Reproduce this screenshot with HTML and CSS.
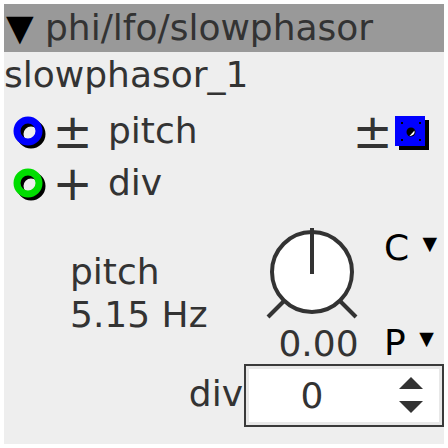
FILE: index.html
```html
<!DOCTYPE html>
<html>
<head>
<meta charset="utf-8">
<link rel="stylesheet" href="styles.css">
</head>
<body>
<div class="panel">
  <div class="header"><span class="tri">▼</span><span class="title">phi/lfo/slowphasor</span></div>
  <div class="name">slowphasor_1</div>
  <div class="ports">
    <div class="port">
      <svg class="ring" width="34" height="34" viewBox="0 0 34 34"><circle cx="18" cy="18" r="11" fill="none" stroke="#000" stroke-width="7"/><circle cx="15" cy="15" r="11" fill="none" stroke="#0000ff" stroke-width="7"/></svg>
      <span class="sym">±</span>
      <span class="plabel">pitch</span>
      <span class="spacer"></span>
      <span class="sym">±</span>
      <svg class="sq" width="36" height="36" viewBox="0 0 36 36">
        <rect x="4" y="4" width="30" height="30" fill="#000"/>
        <rect x="0" y="0" width="30" height="30" fill="#0000ff"/>
        <circle cx="16" cy="16" r="4.5" fill="#000"/>
        <path d="M19.5 14.5 A4.5 4.5 0 0 1 14.5 20 Z" fill="#fff"/>
        <rect x="6" y="6" width="2" height="2" fill="#000"/>
        <rect x="24" y="6" width="2" height="2" fill="#000"/>
        <rect x="6" y="23" width="2" height="2" fill="#000"/>
        <rect x="24" y="23" width="2" height="2" fill="#000"/>
      </svg>
    </div>
    <div class="port">
      <svg class="ring" width="34" height="34" viewBox="0 0 34 34"><circle cx="18" cy="18" r="11" fill="none" stroke="#000" stroke-width="7"/><circle cx="15" cy="15" r="11" fill="none" stroke="#00dd00" stroke-width="7"/></svg>
      <span class="sym">+</span>
      <span class="plabel">div</span>
    </div>
  </div>
  <div class="knobsec">
    <div class="kleft">
      <div>pitch</div>
      <div>5.15 Hz</div>
    </div>
    <div class="kmid">
      <svg class="knob" width="100" height="100" viewBox="0 0 100 100">
        <circle cx="48" cy="48" r="40" fill="#fff" stroke="#333" stroke-width="4"/>
        <line x1="48" y1="4" x2="48" y2="50" stroke="#333" stroke-width="4"/>
        <line x1="4" y1="93" x2="20" y2="77" stroke="#333" stroke-width="4"/>
        <line x1="76" y1="77" x2="92" y2="93" stroke="#333" stroke-width="4"/>
      </svg>
      <div class="kval">0.00</div>
    </div>
    <div class="kright">
      <div class="mode">C <span class="dd">▼</span></div>
      <div class="mode">P <span class="dd">▼</span></div>
    </div>
  </div>
  <div class="divrow">
    <span class="dlabel">div</span>
    <div class="spin">
      <span class="sval">0</span>
      <svg class="arrows" width="26" height="38" viewBox="0 0 26 38"><polygon points="13,0 25,12 1,12" fill="#333"/><polygon points="1,24 25,24 13,36" fill="#333"/></svg>
    </div>
  </div>
</div>
</body>
</html>
```
FILE: styles.css
```css
html, body {
  margin: 0;
  padding: 0;
  background: #fff;
}
.panel {
  margin: 4px;
  width: 440px;
  height: 440px;
  background: #eeeeee;
  color: #333;
  font-family: "DejaVu Sans", sans-serif;
  font-size: 36px;
  display: flex;
  flex-direction: column;
}
.header {
  height: 48px;
  line-height: 48px;
  background: #999999;
  display: flex;
  align-items: center;
  white-space: nowrap;
}
.tri {
  font-size: 36px;
  color: #000;
  margin-left: 2px;
  width: 39px;
}
.name {
  height: 48px;
  line-height: 45px;
}
.ports {
  padding-top: 5px;
  display: flex;
  flex-direction: column;
}
.port {
  height: 52px;
  line-height: 52px;
  display: flex;
  align-items: center;
}
.ring {
  margin-left: 9px;
  margin-top: 4px;
  flex: none;
}
.sym {
  font-size: 48px;
  margin-left: 11px;
  width: 29px;
  display: flex;
  justify-content: center;
}
.plabel {
  margin-left: 21px;
}
.spacer {
  flex: 1;
}
.sq {
  margin-left: 8px;
  margin-right: 13px;
  margin-top: 6px;
  flex: none;
}
.knobsec {
  display: flex;
  height: 155px;
}
.kleft {
  flex: none;
  width: 194px;
  padding-left: 66px;
  padding-top: 41px;
  line-height: 43px;
  white-space: nowrap;
}
.kmid {
  width: 100px;
  display: flex;
  flex-direction: column;
  align-items: center;
  padding-top: 15px;
}
.knob {
  display: block;
}
.kval {
  line-height: 40px;
  margin-left: 9px;
  white-space: nowrap;
}
.kright {
  flex: 1;
  display: flex;
  flex-direction: column;
  justify-content: space-between;
  padding-top: 14px;
  padding-bottom: 1px;
  padding-left: 20px;
}
.mode {
  color: #000;
  line-height: 40px;
  white-space: nowrap;
}
.dd {
  font-size: 19px;
  vertical-align: 10px;
  margin-left: 2px;
}
.divrow {
  display: flex;
  justify-content: flex-end;
  align-items: center;
}
.dlabel {
  margin-right: 1px;
  margin-top: -4px;
}
.spin {
  width: 200px;
  height: 63px;
  box-sizing: border-box;
  border: 2px solid #3a3a3a;
  box-shadow: inset 0 0 0 3px #e8e8e8;
  background: #fff;
  display: flex;
  align-items: center;
}
.sval {
  flex: 1;
  text-align: center;
  padding-right: 20px;
}
.arrows {
  margin-right: 18px;
  flex: none;
}
```
